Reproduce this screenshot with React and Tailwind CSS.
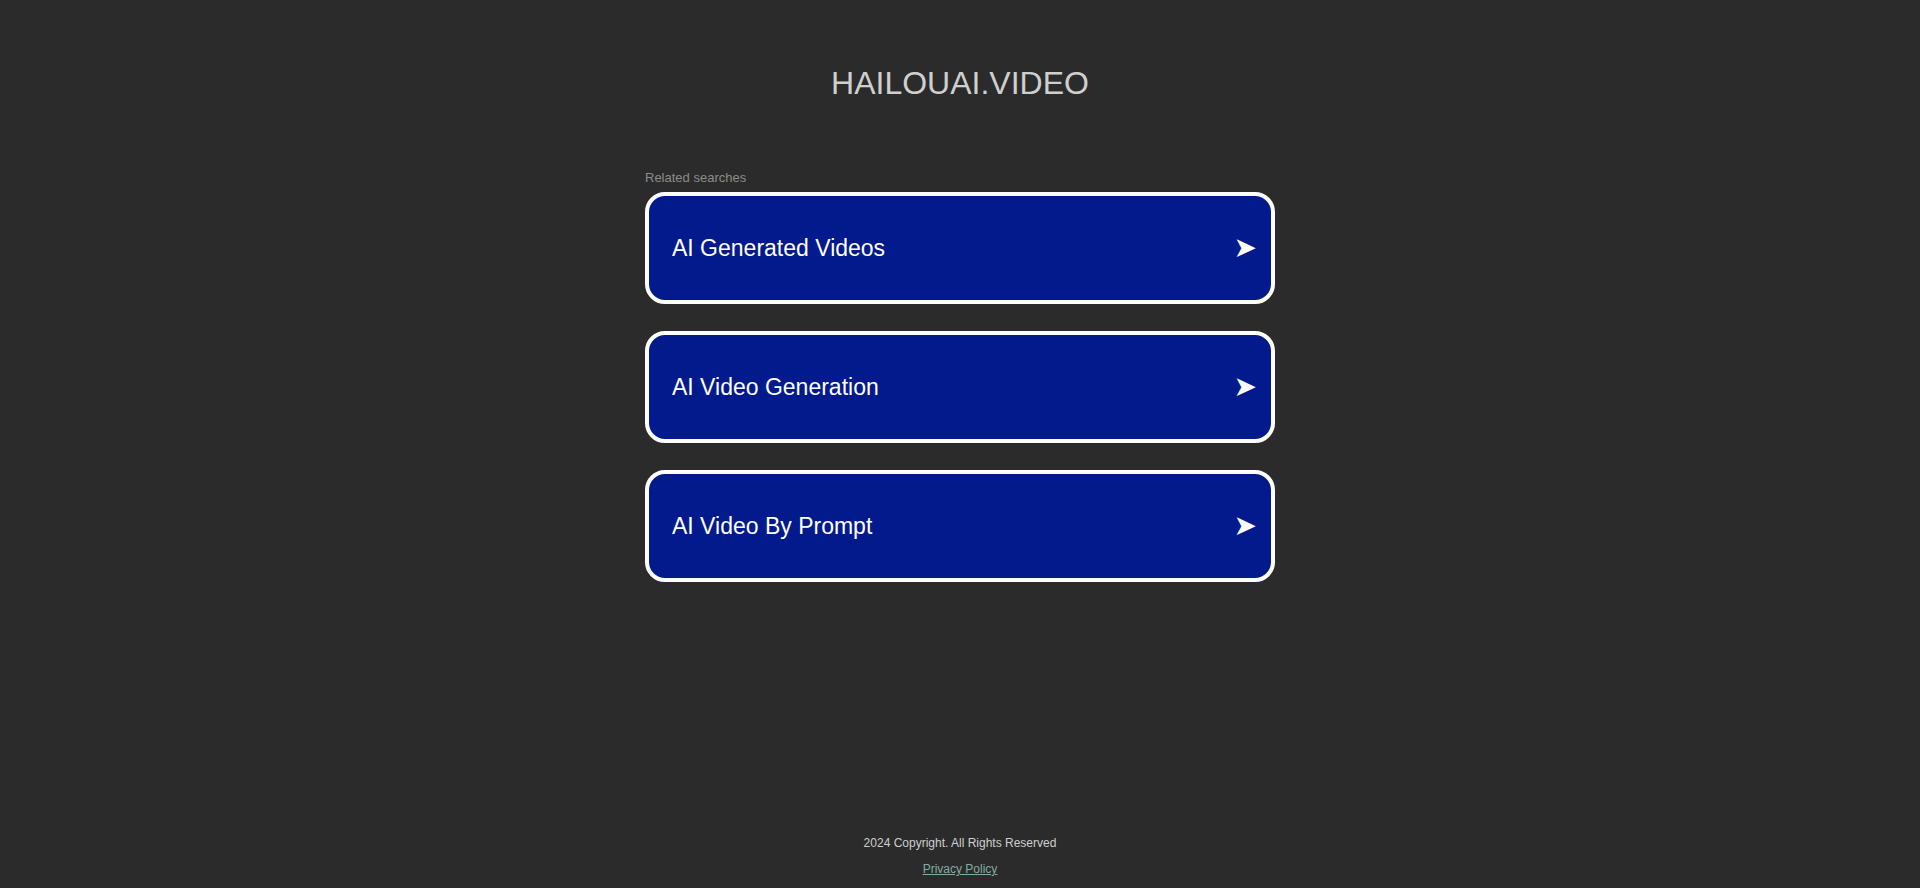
const searches = ["AI Generated Videos", "AI Video Generation", "AI Video By Prompt"];

export default function App() {
  return (
    <div className="min-h-screen bg-[#2b2b2b] flex flex-col items-center font-['Liberation_Sans',Arial,sans-serif]">
      {/* Title */}
      <h1 className="mt-[64px] text-[32px] leading-[38px] text-[#cfcfcf] font-normal">
        HAILOUAI.VIDEO
      </h1>

      {/* Related searches */}
      <div className="mt-[68px] w-[630px]">
        <p className="text-[13px] leading-[16px] text-[#8c8c8c] mb-[6px]">Related searches</p>
        <div className="flex flex-col gap-[27px]">
          {searches.map((s) => (
            <a
              key={s}
              href="#"
              className="h-[112px] rounded-[20px] border-4 border-white bg-[#021a8b] flex items-center justify-between pl-[23px] pr-[14px] text-white"
            >
              <span className="text-[23px] leading-none">{s}</span>
              <span className="text-[28px] leading-none font-['DejaVu_Sans',sans-serif]">➤</span>
            </a>
          ))}
        </div>
      </div>

      {/* Footer */}
      <footer className="mt-auto pb-[12px] flex flex-col items-center text-[12px] leading-[14px]">
        <p className="text-[#cfcfcf]">2024 Copyright. All Rights Reserved</p>
        <a href="#" className="mt-[12px] text-[#84ada2] underline">
          Privacy Policy
        </a>
      </footer>
    </div>
  );
}
